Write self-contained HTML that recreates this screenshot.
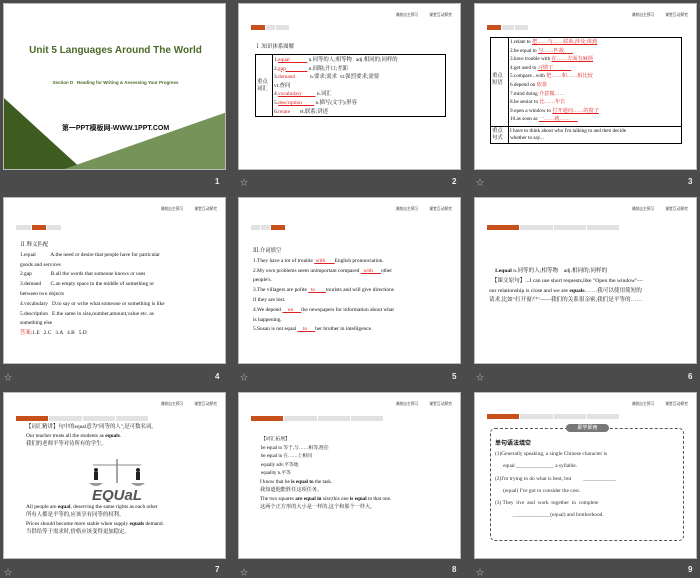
<!DOCTYPE html>
<html><head><meta charset="utf-8"><style>
*{margin:0;padding:0;box-sizing:border-box}
body{width:700px;height:576px;background:#4b4b4b;position:relative;overflow:hidden;font-family:"Liberation Serif","Noto Serif CJK SC",serif;color:#111}
.s{position:absolute;width:223px;height:167px;background:#fff;border:1px solid #bbb;overflow:hidden}
.n{position:absolute;color:#eee;font:bold 8px "Liberation Sans",sans-serif}
.st{position:absolute;color:#bbb;font-size:8px}
.hd{position:absolute;right:8px;top:9px;font:3.8px "Noto Sans CJK SC",sans-serif;color:#444;word-spacing:10px}
.tabs{position:absolute;display:flex;height:5px}
.tabs i{display:block;height:5px;background:#e2e2e2;margin-right:1px}
.tabs i.a{background:#c8501a}
.t{position:absolute;font-size:5.4px;line-height:8.6px;white-space:nowrap;color:#111}
.r{color:#e02020}
.u{text-decoration:underline;color:#e02020}
</style></head><body>

<!-- slide 1 -->
<div class="s" style="left:3px;top:3px">
<svg width="223" height="167" style="position:absolute;left:0;top:0"><polygon points="0,94 80,167 0,167" fill="#3e5b20"/><polygon points="55,167 223,108 223,167" fill="#76945a"/></svg>
<div style="position:absolute;left:0;width:223px;top:41px;text-align:center;font:bold 10px 'Liberation Sans',sans-serif;color:#4a6a2a">Unit 5 Languages Around The World</div>
<div style="position:absolute;left:0;width:223px;top:76px;text-align:center;font:bold 4.5px 'Liberation Sans',sans-serif;color:#4a6a2a">Section D &nbsp; Reading for Writing &amp; Assessing Your Progress</div>
<div style="position:absolute;left:0;width:223px;top:119px;text-align:center;font:bold 7px 'Liberation Sans','Noto Sans CJK SC',sans-serif;color:#111">第一PPT模板网-WWW.1PPT.COM</div>
</div>
<div class="n" style="left:215px;top:177px">1</div>

<!-- slide 2 -->
<div class="s" style="left:238px;top:3px">
<div class="hd">课前自主预习 课堂互动探究</div>
<div class="tabs" style="left:12px;top:21px"><i class="a" style="width:14px"></i><i style="width:9px"></i><i style="width:13px"></i></div>
<div class="t" style="left:16px;top:39px">Ⅰ.知识体系图解</div>
<div style="position:absolute;left:16px;top:50px;width:191px;height:63px;border:1.2px solid #000"></div>
<div style="position:absolute;left:33px;top:50px;height:63px;border-left:1px solid #000"></div>
<div class="t" style="left:18px;top:75px;line-height:7px">重点<br>词汇</div>
<div class="t" style="left:35px;top:52px">1.<span class="u">equal&nbsp;&nbsp;&nbsp;&nbsp;&nbsp;&nbsp;&nbsp;&nbsp;&nbsp;&nbsp;&nbsp;&nbsp;&nbsp;</span>&nbsp;n.同等的人;相等物 &nbsp; adj.相同的;同样的<br>2.<span class="u">gap&nbsp;&nbsp;&nbsp;&nbsp;&nbsp;&nbsp;&nbsp;&nbsp;&nbsp;&nbsp;&nbsp;&nbsp;&nbsp;&nbsp;&nbsp;&nbsp;</span>&nbsp;n.间隔;开口;差距<br>3.<span class="r">demand</span>&nbsp;&nbsp;&nbsp;&nbsp;&nbsp;&nbsp;&nbsp;&nbsp;&nbsp;&nbsp; n.要求;需求 &nbsp;vt.强烈要求;需要<br>vt.查问<br>4.<span class="u">vocabulary&nbsp;&nbsp;&nbsp;&nbsp;&nbsp;&nbsp;&nbsp;&nbsp;&nbsp;&nbsp;</span>&nbsp;n.词汇<br>5.<span class="u">description&nbsp;&nbsp;&nbsp;&nbsp;&nbsp;&nbsp;&nbsp;&nbsp;&nbsp;</span>&nbsp;n.描写(文字);形容<br>6.<span class="r">relate</span>&nbsp;&nbsp;&nbsp;&nbsp;&nbsp;&nbsp; vt.联系;讲述</div>
</div>
<div class="st" style="left:240px;top:177px">☆</div>
<div class="n" style="left:452px;top:177px">2</div>

<!-- slide 3 -->
<div class="s" style="left:474px;top:3px">
<div class="hd">课前自主预习 课堂互动探究</div>
<div class="tabs" style="left:12px;top:21px"><i class="a" style="width:14px"></i><i style="width:12px"></i><i style="width:13px"></i></div>
<div style="position:absolute;left:15px;top:33px;width:192px;height:107px;border:1.2px solid #000"></div>
<div style="position:absolute;left:33px;top:33px;height:107px;border-left:1px solid #000"></div>
<div style="position:absolute;left:15px;top:122px;width:192px;border-top:1px solid #000"></div>
<div class="t" style="left:17px;top:69px;line-height:7px">重点<br>短语</div>
<div class="t" style="left:17px;top:124px;line-height:7px">重点<br>句式</div>
<div class="t" style="left:35px;top:34px;font-size:5.2px">1.relate to <span class="u">把……与……联系;涉及;谈到</span><br>2.be equal to <span class="u">与……匹敌&nbsp;&nbsp;&nbsp;&nbsp;&nbsp;&nbsp;&nbsp;</span><br>3.have trouble with <span class="u">在……方面有麻烦</span><br>4.get used to <span class="u">习惯于&nbsp;&nbsp;&nbsp;&nbsp;&nbsp;&nbsp;&nbsp;&nbsp;&nbsp;&nbsp;&nbsp;&nbsp;&nbsp;&nbsp;</span><br>5.compare...with <span class="r">把……和……相比较</span><br>6.depend on <span class="r">依靠</span><br>7.mind doing <span class="r">介意做……</span><br>8.be senior to <span class="r">比……年长</span><br>9.open a window to <span class="u">打开通向……的窗子</span><br>10.as soon as <span class="u">一……就……&nbsp;&nbsp;&nbsp;&nbsp;&nbsp;&nbsp;</span></div>
<div class="t" style="left:35px;top:124px;line-height:7px;font-size:5.2px">I have to think about who I'm talking to and then decide<br>whether to say...</div>
</div>
<div class="st" style="left:476px;top:177px">☆</div>
<div class="n" style="left:688px;top:177px">3</div>

<!-- slide 4 -->
<div class="s" style="left:3px;top:197px">
<div class="hd">课前自主预习 课堂互动探究</div>
<div class="tabs" style="left:12px;top:27px"><i style="width:15px"></i><i class="a" style="width:14px"></i><i style="width:14px"></i></div>
<div class="t" style="left:16px;top:43px;font-size:5.4px;line-height:9.8px">Ⅱ.释义匹配<br>1.equal &nbsp;&nbsp;&nbsp;&nbsp;&nbsp;&nbsp;&nbsp;&nbsp;&nbsp; A.the need or desire that people have for particular<br>goods and services<br>2.gap &nbsp;&nbsp;&nbsp;&nbsp;&nbsp;&nbsp;&nbsp;&nbsp;&nbsp;&nbsp;&nbsp;&nbsp; B.all the words that someone knows or uses<br>3.demand &nbsp;&nbsp;&nbsp;&nbsp;&nbsp; C.an empty space in the middle of something or<br>between two objects<br>4.vocabulary &nbsp; D.to say or write what someone or something is like<br>5.description &nbsp; E.the same in size,number,amount,value etc. as<br>something else<br><span class="r">答案</span>:1.E &nbsp; 2.C &nbsp; 3.A &nbsp; 4.B &nbsp; 5.D</div>
</div>
<div class="st" style="left:4px;top:372px">☆</div>
<div class="n" style="left:215px;top:372px">4</div>

<!-- slide 5 -->
<div class="s" style="left:238px;top:197px">
<div class="hd">课前自主预习 课堂互动探究</div>
<div class="tabs" style="left:12px;top:27px"><i style="width:9px"></i><i style="width:9px"></i><i class="a" style="width:14px"></i></div>
<div class="t" style="left:14px;top:49px;font-size:5.4px;line-height:9.8px">Ⅲ.介词填空<br>1.They have a lot of trouble <span class="u">&nbsp;with&nbsp;&nbsp;&nbsp;&nbsp;&nbsp;&nbsp;&nbsp;</span>English pronunciation.<br>2.My own problems seem unimportant compared <span class="u">&nbsp;&nbsp;with&nbsp;&nbsp;&nbsp;&nbsp;&nbsp;&nbsp;</span>other<br>people's.<br>3.The villagers are polite <span class="u">&nbsp;&nbsp;to&nbsp;&nbsp;&nbsp;&nbsp;&nbsp;&nbsp;&nbsp;&nbsp;</span>tourists and will give directions<br>if they are lost.<br>4.We depend <span class="u">&nbsp;&nbsp;&nbsp;&nbsp;on&nbsp;&nbsp;&nbsp;&nbsp;&nbsp;&nbsp;</span>the newspapers for information about what<br>is happening.<br>5.Susan is not equal <span class="u">&nbsp;&nbsp;&nbsp;&nbsp;to&nbsp;&nbsp;&nbsp;&nbsp;&nbsp;&nbsp;</span>her brother in intelligence.</div>
</div>
<div class="st" style="left:240px;top:372px">☆</div>
<div class="n" style="left:452px;top:372px">5</div>

<!-- slide 6 -->
<div class="s" style="left:474px;top:197px">
<div class="hd">课前自主预习 课堂互动探究</div>
<div class="tabs" style="left:12px;top:27px"><i class="a" style="width:32px"></i><i style="width:33px"></i><i style="width:32px"></i><i style="width:32px"></i></div>
<div class="t" style="left:14px;top:69px;font-size:5.6px;line-height:9.8px">&nbsp;&nbsp;&nbsp;&nbsp;<b>1.equal</b> n.同等的人;相等物 &nbsp;&nbsp; adj.相同的;同样的<br>&nbsp;&nbsp;【课文原句】...I can use short requests,like "Open the window"—<br>our relationship is close and we are <b>equals</b>.……我可以使用简短的<br>请求,比如"打开窗户"——我们的关系很亲密,我们是平等的……</div>
</div>
<div class="st" style="left:476px;top:372px">☆</div>
<div class="n" style="left:688px;top:372px">6</div>

<!-- slide 7 -->
<div class="s" style="left:3px;top:392px">
<div class="hd">课前自主预习 课堂互动探究</div>
<div class="tabs" style="left:12px;top:23px"><i class="a" style="width:32px"></i><i style="width:33px"></i><i style="width:32px"></i><i style="width:32px"></i></div>
<div class="t" style="left:22px;top:30px;font-size:5.4px;line-height:8.5px">【词汇精讲】句中的equal意为"同等的人",是可数名词。<br>Our teacher treats all the students as <b>equals</b>.<br>我们的老师平等对待所有的学生。</div>
<svg width="60" height="45" style="position:absolute;left:83px;top:64px" viewBox="0 0 60 45"><line x1="30" y1="2" x2="30" y2="26" stroke="#888" stroke-width="1.5"/><line x1="6" y1="8" x2="54" y2="8" stroke="#888" stroke-width="1"/><path d="M2 26 Q9 32 16 26Z M44 26 Q51 32 58 26Z" fill="#999"/><circle cx="9" cy="13" r="2" fill="#222"/><rect x="7" y="15" width="4" height="8" fill="#222"/><circle cx="51" cy="13" r="2" fill="#222"/><rect x="49" y="15" width="4" height="8" fill="#222"/><text x="30" y="43" text-anchor="middle" font-family="Liberation Sans" font-weight="bold" font-style="italic" font-size="15" fill="#555">EQUaL</text></svg>
<div class="t" style="left:22px;top:110px;font-size:5.4px;line-height:8.3px">All people are <b>equal</b>, deserving the same rights as each other<br>所有人都是平等的,应该享有同等的权利。<br>Prices should become more stable when supply <b>equals</b> demand.<br>当供给等于需求时,价格应该变得更加稳定。</div>
</div>
<div class="st" style="left:4px;top:567px">☆</div>
<div class="n" style="left:215px;top:565px">7</div>

<!-- slide 8 -->
<div class="s" style="left:238px;top:392px">
<div class="hd">课前自主预习 课堂互动探究</div>
<div class="tabs" style="left:12px;top:23px"><i class="a" style="width:32px"></i><i style="width:33px"></i><i style="width:32px"></i><i style="width:32px"></i></div>
<div class="t" style="left:22px;top:43px;font-size:4.8px;line-height:8.6px">【词汇拓展】<br>be equal to 等于,与……相等,胜任<br>be equal in 在……上相同<br>equally adv.平等地<br>equality n.平等</div>
<div class="t" style="left:21px;top:85px;font-size:5.2px;line-height:8.3px">I know that he <b>is equal to</b> the task.<br>我知道他能胜任这项任务。<br>The two squares <b>are equal in</b> size;this one <b>is equal</b> to that one.<br>这两个正方形的大小是一样的,这个和那个一样大。</div>
</div>
<div class="st" style="left:240px;top:567px">☆</div>
<div class="n" style="left:452px;top:565px">8</div>

<!-- slide 9 -->
<div class="s" style="left:474px;top:392px">
<div class="hd">课前自主预习 课堂互动探究</div>
<div class="tabs" style="left:12px;top:21px"><i class="a" style="width:32px"></i><i style="width:33px"></i><i style="width:32px"></i><i style="width:32px"></i></div>
<div style="position:absolute;left:15px;top:35px;width:194px;height:113px;border:1px dashed #555;border-radius:5px"></div>
<div style="position:absolute;left:91px;top:31px;width:43px;height:8px;background:#777;border-radius:5px;color:#fff;font:5px 'Noto Sans CJK SC',sans-serif;text-align:center;line-height:8px">即学即用</div>
<div class="t" style="left:20px;top:45px;font:bold 6px 'Noto Sans CJK SC',sans-serif">单句语法填空</div>
<div class="t" style="left:20px;top:55px;font-size:5.4px;line-height:12.3px;color:#333">(1)Generally speaking, a single Chinese character is<br>&nbsp;&nbsp;&nbsp;&nbsp;&nbsp; equal ______________ a syllable.<br>(2)I'm trying to do what is best, but &nbsp;&nbsp;&nbsp;&nbsp;&nbsp;&nbsp;&nbsp; ____________<br>&nbsp;&nbsp;&nbsp;&nbsp;&nbsp; (equal) I've got to consider the cost.<br>(3) They &nbsp;live &nbsp;and &nbsp;work &nbsp;together &nbsp;in &nbsp;complete<br>&nbsp;&nbsp;&nbsp;&nbsp;&nbsp;&nbsp;&nbsp;&nbsp;&nbsp;&nbsp;&nbsp;&nbsp; ______________(equal) and brotherhood.</div>
</div>
<div class="st" style="left:476px;top:567px">☆</div>
<div class="n" style="left:688px;top:565px">9</div>

</body></html>
